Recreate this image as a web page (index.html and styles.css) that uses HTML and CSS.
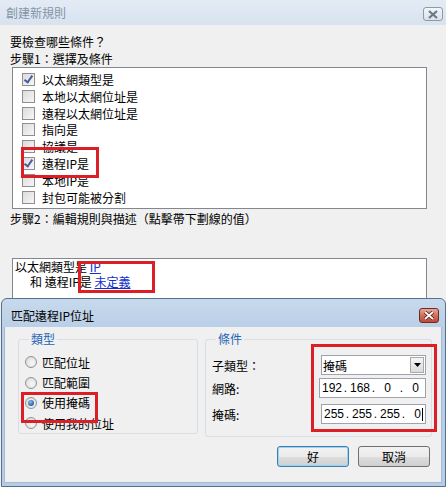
FILE: index.html
```html
<!DOCTYPE html>
<html lang="zh-Hant">
<head>
  <meta charset="UTF-8">
  <title>創建新規則</title>
  <link rel="stylesheet" href="styles.css">
</head>
<body>
  <!-- Back window: new rule -->
  <div class="window">
    <div class="titlebar">
      <span class="title">創建新規則</span>
      <span class="close-btn inactive">
        <svg width="12" height="9" viewBox="0 0 12 9"><path d="M2 1 L10 8 M10 1 L2 8" stroke="#6b7785" stroke-width="2.2"/></svg>
      </span>
    </div>
    <div class="content">
      <p class="line">要檢查哪些條件？</p>
      <p class="line">步驟1：選擇及條件</p>
      <ul class="check-list">
        <li><span class="checkbox checked"></span>以太網類型是</li>
        <li><span class="checkbox"></span>本地以太網位址是</li>
        <li><span class="checkbox"></span>遠程以太網位址是</li>
        <li><span class="checkbox"></span>指向是</li>
        <li><span class="checkbox"></span>協議是</li>
        <li><span class="checkbox checked"></span>遠程IP是</li>
        <li><span class="checkbox"></span>本地IP是</li>
        <li><span class="checkbox"></span>封包可能被分割</li>
      </ul>
      <p class="line step2">步驟2：編輯規則與描述（點擊帶下劃線的值）</p>
      <div class="desc-box">
        <div>以太網類型是 <a href="#" class="link">IP</a></div>
        <div class="indent">和 遠程IP是 <a href="#" class="link">未定義</a></div>
      </div>
    </div>
  </div>

  <!-- Front dialog: match remote IP -->
  <div class="dialog">
    <div class="dialog-title">
      <span class="title">匹配遠程IP位址</span>
      <span class="close-btn active">
        <svg width="12" height="9" viewBox="0 0 12 9"><path d="M2 1 L10 8 M10 1 L2 8" stroke="#5a1a10" stroke-width="3.4"/><path d="M2 1 L10 8 M10 1 L2 8" stroke="#fff" stroke-width="1.8"/></svg>
      </span>
    </div>
    <div class="dialog-body">
      <div class="groups">
        <fieldset class="group group-type">
          <legend>類型</legend>
          <div class="radio"><span class="radio-dot"></span>匹配位址</div>
          <div class="radio"><span class="radio-dot"></span>匹配範圍</div>
          <div class="radio"><span class="radio-dot selected"></span>使用掩碼</div>
          <div class="radio"><span class="radio-dot"></span>使用我的位址</div>
        </fieldset>
        <fieldset class="group group-cond">
          <legend>條件</legend>
          <div class="form-row row-sub">
            <span class="label">子類型：</span>
            <div class="combo">掩碼<span class="combo-btn"><svg width="7" height="4" viewBox="0 0 7 4"><path d="M0 0 H7 L3.5 4 Z" fill="#000"/></svg></span></div>
          </div>
          <div class="form-row row-net">
            <span class="label">網路:</span>
            <div class="ip-field">
              <span class="oct">192</span><span class="dot">.</span><span class="oct">168</span><span class="dot">.</span><span class="oct">0</span><span class="dot">.</span><span class="oct">0</span>
            </div>
          </div>
          <div class="form-row row-mask">
            <span class="label">掩碼:</span>
            <div class="ip-field">
              <span class="oct">255</span><span class="dot">.</span><span class="oct">255</span><span class="dot">.</span><span class="oct">255</span><span class="dot">.</span><span class="oct">0</span><span class="caret"></span>
            </div>
          </div>
        </fieldset>
      </div>
      <div class="buttons">
        <button class="btn default">好</button>
        <button class="btn">取消</button>
      </div>
    </div>
  </div>

  <!-- Red annotation marks -->
  <div class="mark mark-remote-ip"></div>
  <div class="mark mark-undefined"></div>
  <div class="mark mark-use-mask"></div>
  <div class="mark mark-fields"></div>
</body>
</html>
```
FILE: styles.css
```css
/* General */
html, body {
  margin: 0;
  padding: 0;
}

body {
  position: relative;
  width: 446px;
  height: 487px;
  overflow: hidden;
  background: #f0f0f0;
  font-family: "Noto Sans CJK TC", "Noto Sans", sans-serif;
  font-size: 12px;
  color: #000;
}

p {
  margin: 0;
}

/* Back window */
.window {
  height: 487px;
  background: #f0f0f0;
}

.titlebar {
  height: 25px;
  display: flex;
  justify-content: space-between;
  align-items: flex-start;
  background: linear-gradient(#e3ebf5, #d8e3f0);
}

.titlebar .title {
  padding-left: 6px;
  line-height: 26px;
  color: #8493a6;
}

.close-btn {
  display: flex;
  align-items: center;
  justify-content: center;
  box-sizing: border-box;
  border-radius: 3px;
}

.close-btn.inactive {
  width: 20px;
  height: 14px;
  margin: 7px 3px 0 0;
  border: 1px solid #8e99a6;
  background: linear-gradient(#f3f6fa, #d9e1ea);
}

.content {
  padding: 8px 19px 0 10px;
}

.line {
  line-height: 17px;
}

.line.step2 {
  line-height: 18px;
  margin-top: 1px;
}

.check-list {
  list-style: none;
  margin: 0 0 0 2px;
  padding: 3px 0 0 9px;
  height: 137px;
  border: 1px solid #828790;
  background: #fff;
}

.check-list li {
  display: flex;
  align-items: center;
  height: 16.85px;
}

.checkbox {
  position: relative;
  width: 11px;
  height: 11px;
  margin-right: 7px;
  border: 1px solid #8f8f8f;
  background: linear-gradient(135deg, #dcdcdc, #f6f6f6);
}

.checkbox.checked::after {
  content: '';
  position: absolute;
  left: 3px;
  top: 0;
  width: 3px;
  height: 7px;
  border: solid #4a5c9c;
  border-width: 0 2px 2px 0;
  transform: rotate(35deg);
}

.desc-box {
  margin: 30px 0 0 2px;
  height: 80px;
  padding: 0 0 0 2px;
  border: 1px solid #828790;
  background: #fff;
  line-height: 15px;
}

.desc-box .indent {
  padding-left: 15px;
}

.link {
  color: #1030d0;
  text-decoration: underline;
}

/* Front dialog */
.dialog {
  position: absolute;
  left: 1px;
  top: 298px;
  width: 445px;
  height: 189px;
  box-sizing: border-box;
  border: 1px solid #56708f;
  border-radius: 6px 6px 0 0;
  padding: 0 3px 3px 2px;
  background: linear-gradient(#c7d9ec, #b9cfe7 30px, #b7cde6);
}

.dialog-title {
  height: 28px;
  display: flex;
  justify-content: space-between;
  align-items: flex-start;
}

.dialog-title .title {
  padding-left: 7px;
  line-height: 34px;
}

.close-btn.active {
  width: 20px;
  height: 15px;
  margin: 9px 3px 0 0;
  border: 1px solid #6e2b22;
  background: linear-gradient(#e9a897, #d0705c 50%, #c0493a);
}

.dialog-body {
  height: 155px;
  padding: 0;
  background: #f0f0f0;
  border: 1px solid #a7bbd0;
  border-top: none;
}

.groups {
  display: flex;
  gap: 7px;
  padding: 4px 9px 0 13px;
}

.group {
  margin: 0;
  border: 1px solid #d5dfe5;
  border-radius: 3px;
  min-width: 0;
  height: 96px;
}

.group legend {
  padding: 0 2px;
  margin-left: 4px;
  line-height: 16px;
  color: #2463b5;
}

.group-type {
  width: 172px;
  padding: 5px 0 0 6px;
  box-sizing: content-box;
}

.group-cond {
  flex: 1;
  padding: 8px 5px 0 6px;
}

.radio {
  display: flex;
  align-items: center;
  height: 20.4px;
}

.radio-dot {
  position: relative;
  width: 10px;
  height: 10px;
  margin-right: 5px;
  border: 1px solid #929292;
  border-radius: 50%;
  background: radial-gradient(circle at 60% 60%, #f8f8f8, #d6d6d6);
}

.radio-dot.selected::after {
  content: '';
  position: absolute;
  left: 2px;
  top: 2px;
  width: 6px;
  height: 6px;
  border-radius: 50%;
  background: radial-gradient(circle at 40% 35%, #8fc2ef, #1b5fa8 70%);
}

.form-row {
  display: flex;
  align-items: center;
  height: 20px;
}

.form-row.row-net {
  margin-top: 3px;
}

.form-row.row-mask {
  margin-top: 6px;
}

.form-row .label {
  width: 109px;
}

.combo,
.ip-field {
  flex: 1;
  height: 20px;
  box-sizing: border-box;
  display: flex;
  align-items: center;
  border: 1px solid #9ea3ab;
  background: #fff;
}

.combo {
  justify-content: space-between;
  padding: 0 1px 0 1px;
}

.combo-btn {
  display: flex;
  align-items: center;
  justify-content: center;
  width: 14px;
  height: 16px;
  box-sizing: border-box;
  border: 1px solid #a9a9a9;
  background: linear-gradient(#f6f6f6, #dadada);
}

.ip-field {
  padding-left: 2px;
  font-family: "Liberation Sans", Arial, sans-serif;
}

.ip-field .oct {
  width: 19px;
  text-align: center;
}

.ip-field .dot {
  width: 9px;
  text-align: center;
}

.ip-field .caret {
  width: 1px;
  height: 13px;
  margin-left: -5px;
  background: #000;
}

.buttons {
  display: flex;
  justify-content: flex-end;
  gap: 9px;
  padding: 9px 11px 0 0;
}

.btn {
  width: 72px;
  height: 21px;
  padding: 0;
  font-family: inherit;
  font-size: 12px;
  border: 1px solid #707070;
  border-radius: 3px;
  background: linear-gradient(#f2f2f2, #ebebeb 50%, #dddddd 51%, #cfcfcf);
}

.btn.default {
  border-color: #3c7fb1;
  box-shadow: inset 0 0 0 1px #9ad4f5;
}

/* Red annotation marks */
.mark {
  position: absolute;
  border: 3px solid #dc1f26;
  box-sizing: border-box;
}

.mark-remote-ip {
  left: 21px;
  top: 147px;
  width: 78px;
  height: 31px;
}

.mark-undefined {
  left: 78px;
  top: 261px;
  width: 77px;
  height: 32px;
}

.mark-use-mask {
  left: 21px;
  top: 392px;
  width: 77px;
  height: 31px;
}

.mark-fields {
  left: 311px;
  top: 344px;
  width: 126px;
  height: 88px;
}
```
